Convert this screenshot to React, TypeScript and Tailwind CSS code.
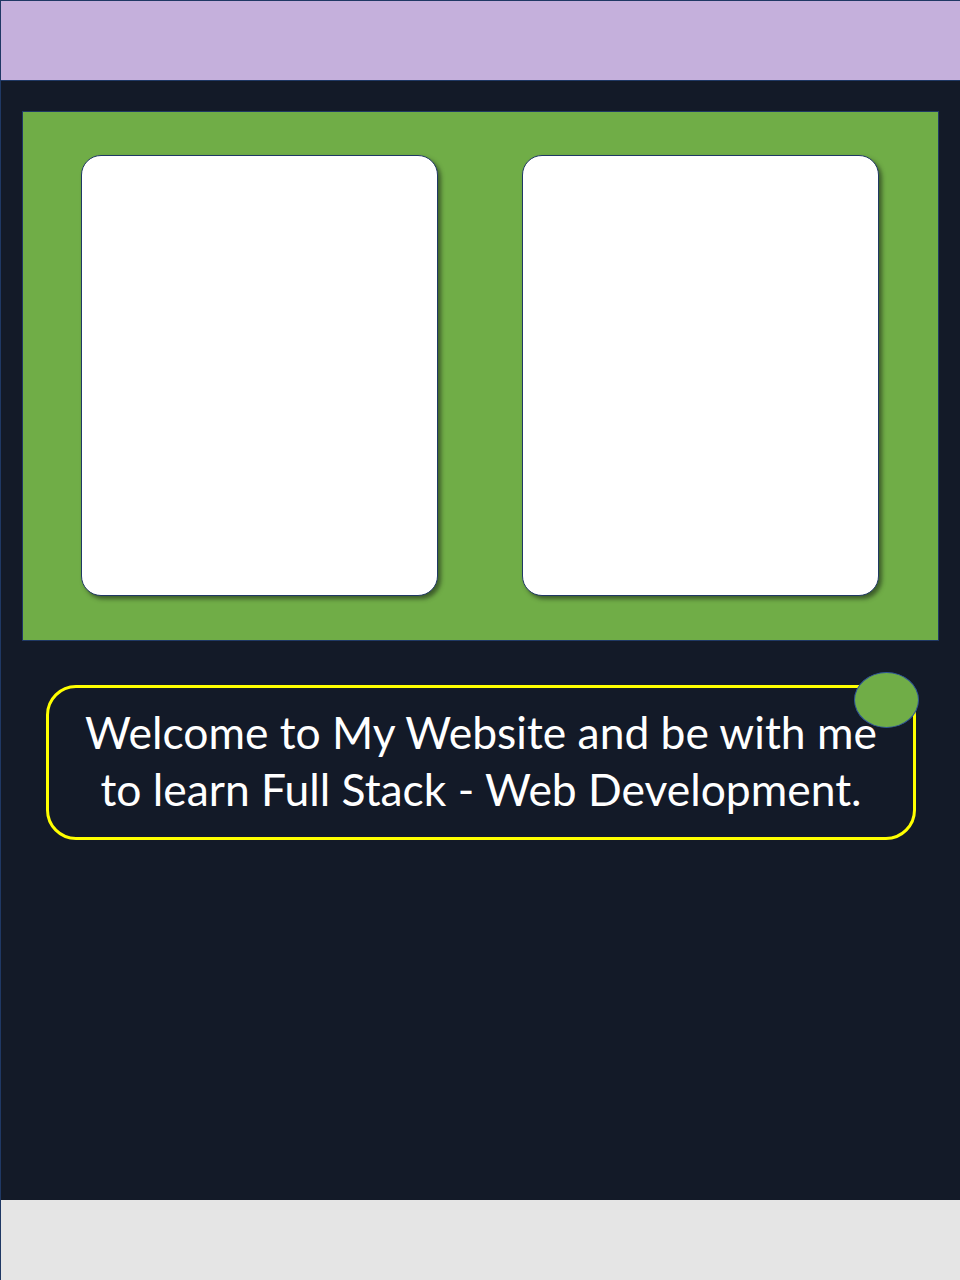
export default function App() {
  return (
    <div
      className="flex h-[1280px] w-[960px] flex-col border-l border-t border-[#1f3864] bg-[#131a28]"
      style={{ fontFamily: 'Lato, "Open Sans", sans-serif' }}
    >
      {/* Header */}
      <header className="h-[80px] shrink-0 border-b border-[#1f3864] bg-[#c5b0dc]" />

      <main className="flex flex-1 flex-col">
        {/* Gallery */}
        <section className="ml-[21px] mr-[21px] mt-[30px] flex h-[530px] gap-[84px] border border-[#1f3864] bg-[#70ad47] px-[58px] py-[43px]">
          <div className="h-[441px] w-[357px] rounded-[20px] border border-[#1f3864] bg-white shadow-[3px_3px_4px_rgba(40,60,30,0.7)]" />
          <div className="h-[441px] w-[357px] rounded-[20px] border border-[#1f3864] bg-white shadow-[3px_3px_4px_rgba(40,60,30,0.7)]" />
        </section>

        {/* Welcome box */}
        <div className="relative ml-[45px] mr-[44px] mt-[44px] flex h-[155px] items-center justify-center rounded-[30px] border-[3px] border-[#ffff00] pb-[5px]">
          <p className="text-center text-[44.4px] leading-[57px] text-white">
            Welcome to My Website and be with me
            <br />
            to learn Full Stack - Web Development.
          </p>
          <span className="absolute right-[-6px] top-[-16px] h-[56px] w-[65px] rounded-[50%] border border-[#2f5597] bg-[#70ad47]" />
        </div>
      </main>

      {/* Footer */}
      <footer className="h-[80px] shrink-0 bg-[#e5e5e5]" />
    </div>
  );
}
